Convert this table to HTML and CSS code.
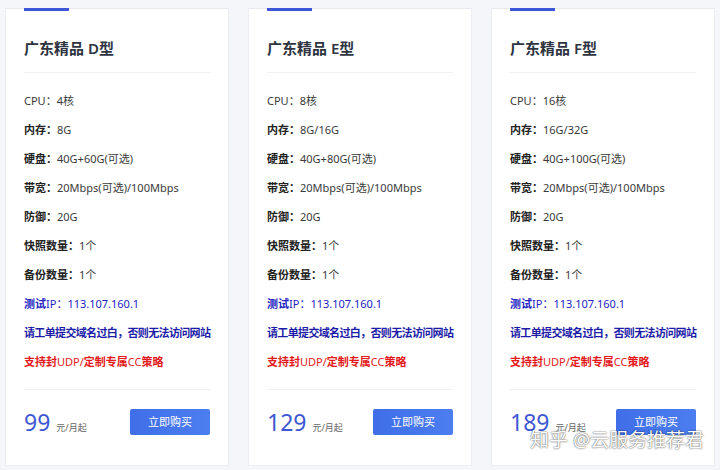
FILE: index.html
```html
<!DOCTYPE html>
<html lang="zh-CN">
<head>
    <meta charset="UTF-8">
    <title>广东精品</title>
    <link rel="stylesheet" href="styles.css">
</head>
<body>
    <div class="plans">
        <div class="card">
            <div class="card-bar"></div>
            <h3 class="card-title">广东精品 <span class="model">D型</span></h3>
            <ul class="specs">
                <li>CPU：4核</li>
                <li><b>内存：</b>8G</li>
                <li><b>硬盘：</b>40G+60G(可选)</li>
                <li><b>带宽：</b>20Mbps(可选)/100Mbps</li>
                <li><b>防御：</b>20G</li>
                <li><b>快照数量：</b>1个</li>
                <li><b>备份数量：</b>1个</li>
                <li class="ip"><b>测试</b>IP：113.107.160.1</li>
                <li class="notice"><b>请工单提交域名过白，否则无法访问网站</b></li>
                <li class="alert"><b>支持封</b>UDP/<b>定制专属</b>CC<b>策略</b></li>
            </ul>
            <div class="card-foot">
                <div class="price"><span class="amount">99</span><span class="unit">元/月起</span></div>
                <a class="buy" href="#">立即购买</a>
            </div>
        </div>
        <div class="card">
            <div class="card-bar"></div>
            <h3 class="card-title">广东精品 <span class="model">E型</span></h3>
            <ul class="specs">
                <li>CPU：8核</li>
                <li><b>内存：</b>8G/16G</li>
                <li><b>硬盘：</b>40G+80G(可选)</li>
                <li><b>带宽：</b>20Mbps(可选)/100Mbps</li>
                <li><b>防御：</b>20G</li>
                <li><b>快照数量：</b>1个</li>
                <li><b>备份数量：</b>1个</li>
                <li class="ip"><b>测试</b>IP：113.107.160.1</li>
                <li class="notice"><b>请工单提交域名过白，否则无法访问网站</b></li>
                <li class="alert"><b>支持封</b>UDP/<b>定制专属</b>CC<b>策略</b></li>
            </ul>
            <div class="card-foot">
                <div class="price"><span class="amount">129</span><span class="unit">元/月起</span></div>
                <a class="buy" href="#">立即购买</a>
            </div>
        </div>
        <div class="card">
            <div class="card-bar"></div>
            <h3 class="card-title">广东精品 <span class="model">F型</span></h3>
            <ul class="specs">
                <li>CPU：16核</li>
                <li><b>内存：</b>16G/32G</li>
                <li><b>硬盘：</b>40G+100G(可选)</li>
                <li><b>带宽：</b>20Mbps(可选)/100Mbps</li>
                <li><b>防御：</b>20G</li>
                <li><b>快照数量：</b>1个</li>
                <li><b>备份数量：</b>1个</li>
                <li class="ip"><b>测试</b>IP：113.107.160.1</li>
                <li class="notice"><b>请工单提交域名过白，否则无法访问网站</b></li>
                <li class="alert"><b>支持封</b>UDP/<b>定制专属</b>CC<b>策略</b></li>
            </ul>
            <div class="card-foot">
                <div class="price"><span class="amount">189</span><span class="unit">元/月起</span></div>
                <a class="buy" href="#">立即购买</a>
            </div>
        </div>
    </div>
    <div class="watermark">知乎 @云服务推荐君</div>
</body>
</html>
```

FILE: styles.css
```css
body {
    margin: 0;
    padding: 0;
    background-color: #f4f6fa;
    font-family: "Noto Sans", "Noto Sans CJK SC", sans-serif;
    color: #333;
    overflow: hidden;
}
.plans {
    display: flex;
    gap: 19px;
    padding: 8px 5px 0;
}
.card {
    width: 224px;
    height: 458px;
    box-sizing: border-box;
    padding: 0 18px;
    background-color: #ffffff;
    border: 1px solid #eceef4;
    border-top-color: #e6e9f0;
}
.card-bar {
    width: 45px;
    height: 3px;
    margin-top: -1px;
    background-color: #3c56d6;
}
.card-title {
    margin: 27px 0 0;
    padding-bottom: 14px;
    font-size: 15px;
    line-height: 20px;
    font-weight: bold;
    color: #2e3440;
    border-bottom: 1px solid #f0f1f5;
}
.card-title .model {
    font-weight: 600;
}
.specs {
    list-style: none;
    margin: 0;
    padding: 13px 0 13px;
    border-bottom: 1px solid #f0f1f5;
}
.specs li {
    height: 29px;
    line-height: 29px;
    font-size: 11px;
    color: #3a3a3a;
    white-space: nowrap;
}
.specs b {
    color: #222;
}
.specs .ip,
.specs .ip b {
    color: #2323c2;
}
.specs .notice {
    letter-spacing: -0.65px;
}
.specs .notice b {
    color: #1c1ca8;
}
.specs .alert,
.specs .alert b {
    color: #e3191b;
}
.card-foot {
    display: flex;
    justify-content: space-between;
    align-items: center;
    padding-top: 16px;
}
.price {
    display: flex;
    align-items: baseline;
}
.amount {
    font-size: 23px;
    color: #4058d4;
    margin-right: 6px;
}
.unit {
    font-size: 9px;
    color: #666;
}
.buy {
    width: 80px;
    height: 26px;
    line-height: 26px;
    text-align: center;
    font-size: 11px;
    color: #fff;
    text-decoration: none;
    border-radius: 2px;
    background: linear-gradient(90deg, #3f6ee8, #4d7ef0);
}
.watermark {
    position: absolute;
    right: 16px;
    bottom: 17px;
    font-size: 19px;
    color: #fff;
    text-shadow: 0 0 2px rgba(0, 0, 0, 0.55), 0 0 1px rgba(0, 0, 0, 0.5);
}
```
